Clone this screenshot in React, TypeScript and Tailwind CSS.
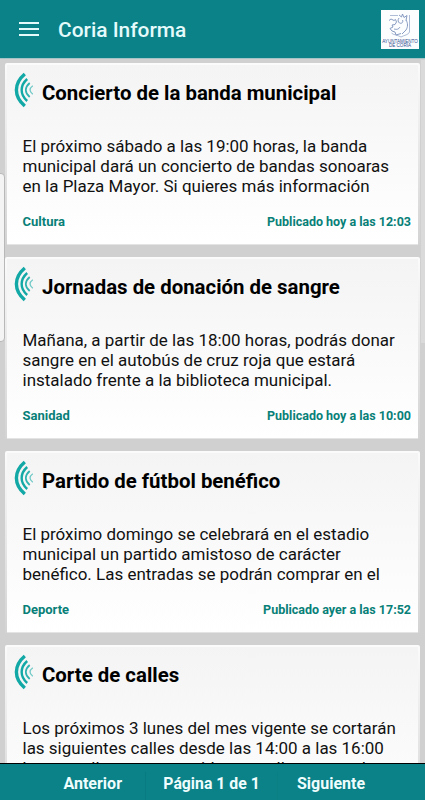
type Notice = {
  title: string;
  lines: string[];
  category?: string;
  published?: string;
};

const notices: Notice[] = [
  {
    title: "Concierto de la banda municipal",
    lines: [
      "El próximo sábado a las 19:00 horas, la banda",
      "municipal dará un concierto de bandas sonoaras",
      "en la Plaza Mayor. Si quieres más información",
    ],
    category: "Cultura",
    published: "Publicado hoy a las 12:03",
  },
  {
    title: "Jornadas de donación de sangre",
    lines: [
      "Mañana, a partir de las 18:00 horas, podrás donar",
      "sangre en el autobús de cruz roja que estará",
      "instalado frente a la biblioteca municipal.",
    ],
    category: "Sanidad",
    published: "Publicado hoy a las 10:00",
  },
  {
    title: "Partido de fútbol benéfico",
    lines: [
      "El próximo domingo se celebrará en el estadio",
      "municipal un partido amistoso de carácter",
      "benéfico. Las entradas se podrán comprar en el",
    ],
    category: "Deporte",
    published: "Publicado ayer a las 17:52",
  },
  {
    title: "Corte de calles",
    lines: [
      "Los próximos 3 lunes del mes vigente se cortarán",
      "las siguientes calles desde las 14:00 a las 16:00",
      "horas: calle nueva, avenida sur, calle mayor y la",
    ],
  },
];

function SignalIcon() {
  return (
    <svg width="20" height="36" viewBox="0 0 20 36" fill="none" stroke="#12a8a6" className="shrink-0">
      <path d="M10.800 2C-.4 11.500-.4 24.500 10.800 34" strokeWidth="3.400" />
      <path d="M13.200 7C5.800 13.500 5.800 22.500 13.200 29" strokeWidth="2.400" />
      <path d="M15.700 11C10.500 15.500 10.500 20.500 15.700 25" strokeWidth="1.700" stroke="#2fb2b0" />
      <path d="M18.800 13.800C15.100 16.500 15.100 19.500 18.800 22.200" strokeWidth="1.300" stroke="#70c9c6" />
    </svg>
  );
}

function TownLogo() {
  return (
    <div className="flex h-[39px] w-[38px] flex-col items-center bg-[#fbfdff]">
      <svg width="38" height="30" viewBox="0 0 38 30" fill="none" stroke="#7c91bb" strokeWidth=".9" className="shrink-0">
        <path d="M9 5.500h8M28.500 5v17c-1 3-5 3-8.500 5-3-2-8-2-9.500-4" strokeWidth=".6" />
        <path d="M8 10.500l2-1.500 3 1.500 1.500-1 1 2.500-1.500 2.500-3 .5 1 2-3 1.500 2 2.500 3 1 1 3 5-1.500" />
        <path d="M18 8c-1.500 2-1 4 .5 5 2 1 4-.5 3-3M18 5l2.500 2 1-3 1.500 3.500 3-2-1 5M25 10c2 3 2 7 0 10l-4 4" />
        <path d="M13 19c3 1 5 0 6-2" strokeWidth=".8" />
      </svg>
      <div className="text-center font-['Liberation_Sans'] text-[4.600px] leading-[4.400px] text-[#34508f]">
        AYUNTAMIENTO
        <br />
        DE CORIA
      </div>
    </div>
  );
}

function NoticeCard({ notice }: { notice: Notice }) {
  return (
    <article className="h-[182px] shrink-0 rounded-t-[2px] bg-linear-to-b from-[#fbfbfb] to-[#d3d3d3] px-[2px] pt-[2px]">
      <div className="flex h-[180px] flex-col border-b border-[#e4e4e4] bg-linear-to-b from-[#f4f4f4] to-white">
        <div className="flex pt-[7px] pl-[7px]">
          <SignalIcon />
          <h2 className="pt-[9px] pl-[8px] text-[20.400px] leading-6 font-bold whitespace-nowrap text-black">
            {notice.title}
          </h2>
        </div>
        <div className="mt-[29px] pl-[15.500px] text-[16.980px] leading-[19.800px] whitespace-nowrap text-[#111]">
          {notice.lines.map((line) => (
            <p key={line}>{line}</p>
          ))}
        </div>
        {notice.category ? (
          <div className="mt-[17.400px] flex justify-between pr-[7px] pl-[15.500px] leading-4 font-bold text-[#088078]">
            <span className="text-[13px]">{notice.category}</span>
            <span className="text-[12.500px]">{notice.published}</span>
          </div>
        ) : null}
      </div>
    </article>
  );
}

export default function App() {
  return (
    <div className="relative flex h-[800px] w-[425px] flex-col overflow-hidden bg-[#d0d0d0] font-[Roboto,sans-serif]">
      <header className="flex h-[58px] shrink-0 items-center bg-[#0a8288] pr-[6px] pl-[19px] text-[#e5fbfb]">
        <svg width="20" height="16" viewBox="0 0 20 16" fill="none" stroke="currentColor" strokeWidth="2">
          <path d="M0 2h20M0 8h20M0 14h20" />
        </svg>
        <h1 className="ml-[19px] pt-[3px] text-[20.900px] font-medium">Coria Informa</h1>
        <div className="ml-auto">
          <TownLogo />
        </div>
      </header>
      <main className="flex min-h-0 flex-1 flex-col gap-[12px] overflow-hidden border-t border-[#a5c4c6] px-[5px] pt-[4px]">
        {notices.map((notice) => (
          <NoticeCard key={notice.title} notice={notice} />
        ))}
      </main>
      <nav className="flex h-[37px] shrink-0 border-t border-black bg-[#0a8288] pt-[8px] text-[16px] leading-6 font-bold whitespace-nowrap text-[#effdfd]">
        <span className="w-[146px] border-r border-[#087b80] pr-[23px] text-right">Anterior</span>
        <span className="w-[132px] border-r border-[#0a7f84] text-center text-[15.800px]">Página 1 de 1</span>
        <span className="pl-[19px]">Siguiente</span>
      </nav>
      {/* edge panel handle and scroll bar */}
      <div className="absolute top-[173px] -left-[5px] h-[169px] w-[10px] rounded-[4px] border border-[#b8b8b8] bg-[#f4f4f4]" />
      <div className="absolute top-[60px] right-0 h-[283px] w-[4px] bg-[#dadada]" />
    </div>
  );
}
